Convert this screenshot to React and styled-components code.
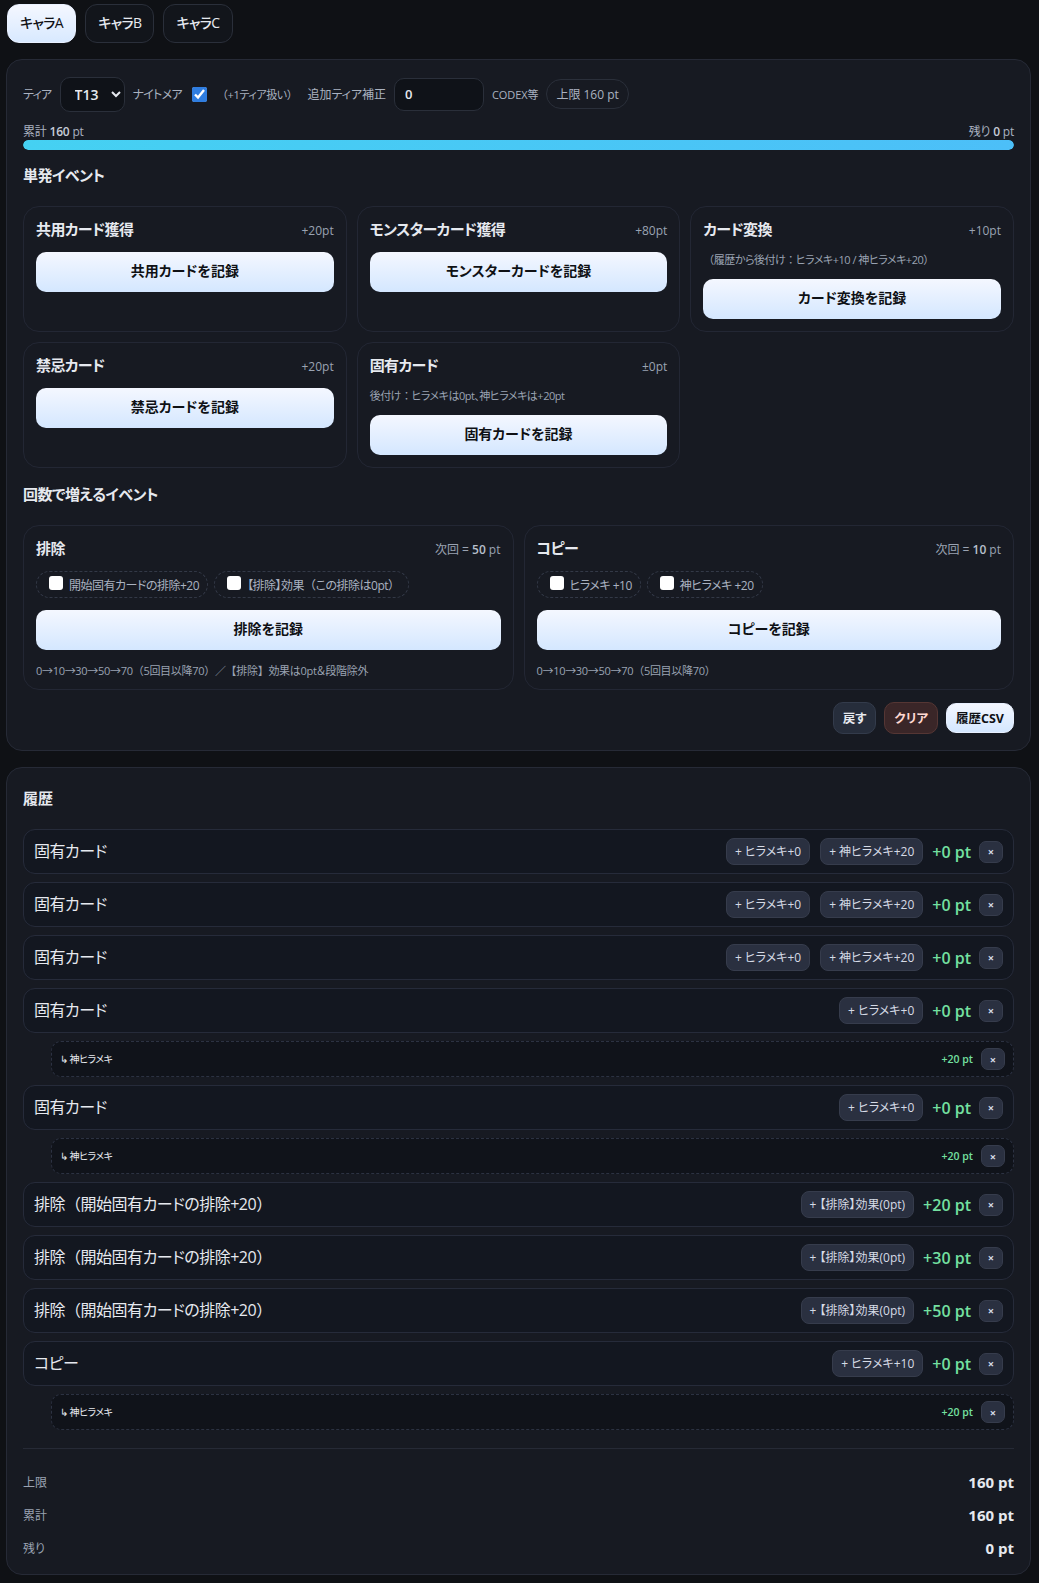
import React from "react";
import styled, { createGlobalStyle } from "styled-components";

const GlobalStyle = createGlobalStyle`
  html, body {
    margin: 0;
    padding: 0;
    background: #0f1115;
    color: #e6e9ef;
    color-scheme: dark;
    font-family: "Open Sans", "Noto Sans CJK JP", sans-serif;
  }
  * {
    box-sizing: border-box;
    font-feature-settings: "palt";
  }
  button, input, select {
    font-family: inherit;
  }
`;

const history = [
  { name: "固有カード", tags: ["+ ヒラメキ+0", "+ 神ヒラメキ+20"], pt: "+0 pt" },
  { name: "固有カード", tags: ["+ ヒラメキ+0", "+ 神ヒラメキ+20"], pt: "+0 pt" },
  { name: "固有カード", tags: ["+ ヒラメキ+0", "+ 神ヒラメキ+20"], pt: "+0 pt" },
  { name: "固有カード", tags: ["+ ヒラメキ+0"], pt: "+0 pt", sub: true },
  { name: "固有カード", tags: ["+ ヒラメキ+0"], pt: "+0 pt", sub: true },
  { name: "排除（開始固有カードの排除+20）", tags: ["+ 【排除】効果(0pt)"], pt: "+20 pt" },
  { name: "排除（開始固有カードの排除+20）", tags: ["+ 【排除】効果(0pt)"], pt: "+30 pt" },
  { name: "排除（開始固有カードの排除+20）", tags: ["+ 【排除】効果(0pt)"], pt: "+50 pt" },
  { name: "コピー", tags: ["+ ヒラメキ+10"], pt: "+0 pt", sub: true },
];

// brackets keep their full width, only the kana get packed
const jp = (text) =>
  text
    .split(/([（）【】：])/)
    .map((part, i) => (i % 2 ? <Punct key={i}>{part}</Punct> : part));

function App() {
  return (
    <Page>
      <GlobalStyle />
      <Tabs>
        <Tab $active>キャラA</Tab>
        <Tab>キャラB</Tab>
        <Tab>キャラC</Tab>
      </Tabs>

      <Panel>
        <Controls>
          <Label $tight>ティア</Label>
          <TierSelect defaultValue="T13">
            <option>T13</option>
          </TierSelect>
          <Label $tight>ナイトメア</Label>
          <Check type="checkbox" defaultChecked />
          <Hint $spaced>{jp("（+1ティア扱い）")}</Hint>
          <Label>追加ティア補正</Label>
          <NumberInput defaultValue="0" />
          <Hint>CODEX等</Hint>
          <CapPill>上限 160 pt</CapPill>
        </Controls>

        <ProgressLabels>
          <span>累計 <b>160</b> pt</span>
          <span>残り <b>0</b> pt</span>
        </ProgressLabels>
        <ProgressTrack>
          <ProgressFill style={{ width: "100%" }} />
        </ProgressTrack>

        <SectionTitle>単発イベント</SectionTitle>
        <CardGrid>
          <Card>
            <CardHead>
              <CardTitle>共用カード獲得</CardTitle>
              <CardPoint>+20pt</CardPoint>
            </CardHead>
            <RecordButton>共用カードを記録</RecordButton>
          </Card>
          <Card>
            <CardHead>
              <CardTitle>モンスターカード獲得</CardTitle>
              <CardPoint>+80pt</CardPoint>
            </CardHead>
            <RecordButton>モンスターカードを記録</RecordButton>
          </Card>
          <Card>
            <CardHead>
              <CardTitle>カード変換</CardTitle>
              <CardPoint>+10pt</CardPoint>
            </CardHead>
            <CardNote>{jp("（履歴から後付け：ヒラメキ+10 / 神ヒラメキ+20）")}</CardNote>
            <RecordButton>カード変換を記録</RecordButton>
          </Card>
          <Card>
            <CardHead>
              <CardTitle>禁忌カード</CardTitle>
              <CardPoint>+20pt</CardPoint>
            </CardHead>
            <RecordButton>禁忌カードを記録</RecordButton>
          </Card>
          <Card>
            <CardHead>
              <CardTitle>固有カード</CardTitle>
              <CardPoint>±0pt</CardPoint>
            </CardHead>
            <CardNote>{jp("後付け：ヒラメキは0pt、神ヒラメキは+20pt")}</CardNote>
            <RecordButton>固有カードを記録</RecordButton>
          </Card>
        </CardGrid>

        <SectionTitle>回数で増えるイベント</SectionTitle>
        <CounterGrid>
          <Card>
            <CardHead>
              <CardTitle>排除</CardTitle>
              <CardPoint>次回 = <b>50</b> pt</CardPoint>
            </CardHead>
            <OptionRow>
              <OptionPill>
                <SmallCheck type="checkbox" />
                <span>開始固有カードの排除+20</span>
              </OptionPill>
              <OptionPill>
                <SmallCheck type="checkbox" />
                <span>【排除】効果{jp("（この排除は0pt）")}</span>
              </OptionPill>
            </OptionRow>
            <RecordButton>排除を記録</RecordButton>
            <StepNote>{jp("0→10→30→50→70（5回目以降70）／【排除】効果は0pt＆段階除外")}</StepNote>
          </Card>
          <Card>
            <CardHead>
              <CardTitle>コピー</CardTitle>
              <CardPoint>次回 = <b>10</b> pt</CardPoint>
            </CardHead>
            <OptionRow>
              <OptionPill>
                <SmallCheck type="checkbox" />
                <span>ヒラメキ +10</span>
              </OptionPill>
              <OptionPill>
                <SmallCheck type="checkbox" />
                <span>神ヒラメキ +20</span>
              </OptionPill>
            </OptionRow>
            <RecordButton>コピーを記録</RecordButton>
            <StepNote>{jp("0→10→30→50→70（5回目以降70）")}</StepNote>
          </Card>
        </CounterGrid>

        <ActionRow>
          <ActionButton>戻す</ActionButton>
          <ActionButton $kind="danger">クリア</ActionButton>
          <ActionButton $kind="light">履歴CSV</ActionButton>
        </ActionRow>
      </Panel>

      <Panel>
        <HistoryTitle>履歴</HistoryTitle>
        <HistoryList>
          {history.map((item, i) => (
            <React.Fragment key={i}>
              <HistoryRow>
                <HistoryName>{jp(item.name)}</HistoryName>
                {item.tags.map((tag) => (
                  <Tag key={tag}>{tag}</Tag>
                ))}
                <HistoryPoint>{item.pt}</HistoryPoint>
                <CloseButton>×</CloseButton>
              </HistoryRow>
              {item.sub && (
                <SubRow>
                  <SubName>↳ 神ヒラメキ</SubName>
                  <SubPoint>+20 pt</SubPoint>
                  <CloseButton>×</CloseButton>
                </SubRow>
              )}
            </React.Fragment>
          ))}
        </HistoryList>
        <Summary>
          <SummaryRow><span>上限</span><b>160 pt</b></SummaryRow>
          <SummaryRow><span>累計</span><b>160 pt</b></SummaryRow>
          <SummaryRow><span>残り</span><b>0 pt</b></SummaryRow>
        </Summary>
      </Panel>
    </Page>
  );
}

export default App;

const Punct = styled.span`
  font-feature-settings: normal;
`;

const Page = styled.div`
  padding: 4px 8px 9px 6px;
  display: flex;
  flex-direction: column;
  gap: 16px;
`;

const Tabs = styled.div`
  display: flex;
  gap: 9px;
  padding-left: 1px;
`;

const Tab = styled.button`
  height: 39px;
  padding: 0 12px 3px;
  border-radius: 12px;
  border: 1px solid ${(p) => (p.$active ? "#e8f0ff" : "#2a2f3a")};
  background: ${(p) =>
    p.$active ? "linear-gradient(180deg, #f4f7ff, #d8e9ff)" : "#12151b"};
  color: ${(p) => (p.$active ? "#0f1115" : "#e6e9ef")};
  font-size: 14px;
  font-weight: 500;
  letter-spacing: -0.6px;
`;

const Panel = styled.section`
  background: #171a22;
  border: 1px solid #262a36;
  border-radius: 16px;
  padding: 16px;
`;

const Controls = styled.div`
  display: flex;
  align-items: center;
  gap: 8px;
  height: 36px;
`;

const Label = styled.span`
  font-size: 12px;
  letter-spacing: ${(p) => (p.$tight ? "-0.7px" : "0")};
  color: #aab2c0;
`;

const Hint = styled.span`
  font-size: 11px;
  letter-spacing: ${(p) => (p.$spaced ? "-0.4px" : "-0.1px")};
  color: #aab2c0;
  margin-right: ${(p) => (p.$spaced ? "2px" : "0")};
`;

const TierSelect = styled.select`
  width: 65px;
  height: 35px;
  padding: 0 6px 0 10px;
  border-radius: 10px;
  border: 1px solid #2a2f3a;
  background: #0f1218;
  color: #e6e9ef;
  font-size: 14px;
  font-weight: 600;
`;

const Check = styled.input`
  width: 15px;
  height: 15px;
  margin: 0 2px;
  accent-color: #2f7de0;
`;

const NumberInput = styled.input`
  width: 90px;
  height: 33px;
  padding: 0 10px;
  border-radius: 10px;
  border: 1px solid #2a2f3a;
  background: #0f1218;
  color: #e6e9ef;
  font-size: 13px;
  font-weight: 600;
  outline: none;
`;

const CapPill = styled.span`
  height: 30px;
  padding: 0 9px;
  display: inline-flex;
  align-items: center;
  border: 1px solid #2a2f3a;
  border-radius: 999px;
  font-size: 12px;
  color: #aab2c0;
`;

const ProgressLabels = styled.div`
  display: flex;
  justify-content: space-between;
  margin-top: 12px;
  height: 16px;
  line-height: 16px;
  font-size: 12px;
  letter-spacing: -0.2px;
  color: #aab2c0;
  b { font-weight: 600; color: #c6ccd8; }
`;

const ProgressTrack = styled.div`
  height: 10px;
  border-radius: 999px;
  background: #0f1218;
  overflow: hidden;
`;

const ProgressFill = styled.div`
  height: 100%;
  border-radius: 999px;
  background: linear-gradient(90deg, #45d1f2, #4cbff8);
`;

const SectionTitle = styled.h3`
  margin: 15px 0 21px;
  font-size: 15px;
  line-height: 20px;
  font-weight: 700;
  letter-spacing: -0.5px;
  color: #e6e9ef;
`;

const CardGrid = styled.div`
  display: grid;
  grid-template-columns: repeat(3, 1fr);
  gap: 10px;
  margin-bottom: 16px;
`;

const CounterGrid = styled.div`
  display: grid;
  grid-template-columns: repeat(2, 1fr);
  gap: 10px;
  margin-top: 21px;
`;

const Card = styled.div`
  border: 1px solid #232734;
  border-radius: 16px;
  background: #171a22;
  padding: 12px;
`;

const CardHead = styled.div`
  display: flex;
  align-items: center;
  justify-content: space-between;
  height: 22px;
  margin-bottom: 11px;
`;

const CardTitle = styled.div`
  padding-bottom: 3px;
  font-size: 15px;
  font-weight: 700;
  letter-spacing: -0.6px;
  color: #e6e9ef;
`;

const CardPoint = styled.div`
  font-size: 12px;
  color: #9aa3b2;
  b { font-weight: 600; color: #b8c0cc; }
`;

const CardNote = styled.div`
  font-size: 11px;
  line-height: 16px;
  letter-spacing: -0.5px;
  margin-bottom: 11px;
  color: #9aa3b2;
`;

const RecordButton = styled.button`
  display: block;
  width: 100%;
  height: 40px;
  padding: 0 0 4px;
  border: none;
  border-radius: 10px;
  background: linear-gradient(180deg, #f4f7ff, #d4e7ff);
  color: #0f1115;
  font-size: 14px;
  font-weight: 600;
`;

const OptionRow = styled.div`
  display: flex;
  gap: 6px;
  margin-bottom: 12px;
`;

const OptionPill = styled.label`
  height: 27px;
  padding: 0 8px 0 12px;
  display: inline-flex;
  align-items: center;
  gap: 6px;
  border: 1px dashed #333947;
  border-radius: 999px;
  font-size: 12px;
  letter-spacing: -0.5px;
  color: #aab2c0;
`;

const SmallCheck = styled.input`
  appearance: none;
  width: 14px;
  height: 14px;
  margin: 0 0 3px;
  border-radius: 3px;
  background: #fff;
`;

const StepNote = styled.div`
  margin-top: 14px;
  font-size: 11px;
  line-height: 13px;
  letter-spacing: -0.3px;
  color: #9aa3b2;
`;

const actionStyles = {
  danger: "background:#3a2628;border-color:#553634;color:#ffd9d2;",
  light: "height:30px;background:linear-gradient(180deg,#f4f7ff,#d4e7ff);border-color:#e8f0ff;color:#0f1115;",
};

const ActionButton = styled.button`
  height: 32px;
  padding: 0 9px 2px;
  border-radius: 10px;
  border: 1px solid #333b4b;
  background: #262d3b;
  color: #e6e9ef;
  font-size: 12.5px;
  font-weight: 700;
  ${(p) => actionStyles[p.$kind] || ""}
`;

const ActionRow = styled.div`
  display: flex;
  justify-content: flex-end;
  align-items: center;
  gap: 8px;
  margin-top: 12px;
`;

const HistoryTitle = styled.h3`
  margin: 0 0 20px;
  padding-top: 4px;
  padding-bottom: 1px;
  font-size: 15px;
  line-height: 20px;
  font-weight: 700;
`;

const HistoryList = styled.div`
  display: flex;
  flex-direction: column;
  gap: 8px;
`;

const HistoryRow = styled.div`
  height: 45px;
  display: flex;
  align-items: center;
  gap: 10px;
  padding: 0 10px;
  border: 1px solid #262b3a;
  border-radius: 12px;
  background: #131720;
`;

const HistoryName = styled.div`
  flex: 1;
  padding-bottom: 3px;
  font-size: 16px;
  letter-spacing: -0.5px;
  color: #e6e9ef;
`;

const Tag = styled.span`
  height: 27px;
  display: inline-flex;
  align-items: center;
  padding: 0 8px 2px;
  border: 1px solid #363c4c;
  border-radius: 8px;
  background: #2a3040;
  font-size: 12px;
  color: #d6dbe6;
`;

const HistoryPoint = styled.div`
  margin: 0 -2px 0 -1px;
  font-size: 16px;
  font-weight: 600;
  color: #74e0a0;
`;

const CloseButton = styled.button`
  width: 24px;
  height: 22px;
  padding: 0;
  border: 1px solid #363c4c;
  border-radius: 7px;
  background: #2a3040;
  color: #d6dbe6;
  font-size: 11px;
  font-weight: 700;
`;

const SubRow = styled.div`
  height: 36px;
  margin-left: 28px;
  display: flex;
  align-items: center;
  gap: 8px;
  padding: 0 8px;
  border: 1px dashed #2c3242;
  border-radius: 10px;
  background: #10131a;
`;

const SubName = styled.div`
  flex: 1;
  padding-bottom: 2px;
  font-size: 10px;
  letter-spacing: -0.5px;
  color: #e6e9ef;
`;

const SubPoint = styled.div`
  font-size: 10.5px;
  font-weight: 600;
  color: #74e0a0;
`;

const Summary = styled.div`
  margin: 18px 0 1px;
  padding-top: 24px;
  border-top: 1px solid #262a36;
  display: flex;
  flex-direction: column;
  gap: 15px;
`;

const SummaryRow = styled.div`
  height: 18px;
  display: flex;
  align-items: center;
  justify-content: space-between;
  font-size: 12px;
  color: #9aa3b2;
  b { font-size: 15px; font-weight: 700; color: #e6e9ef; }
`;
